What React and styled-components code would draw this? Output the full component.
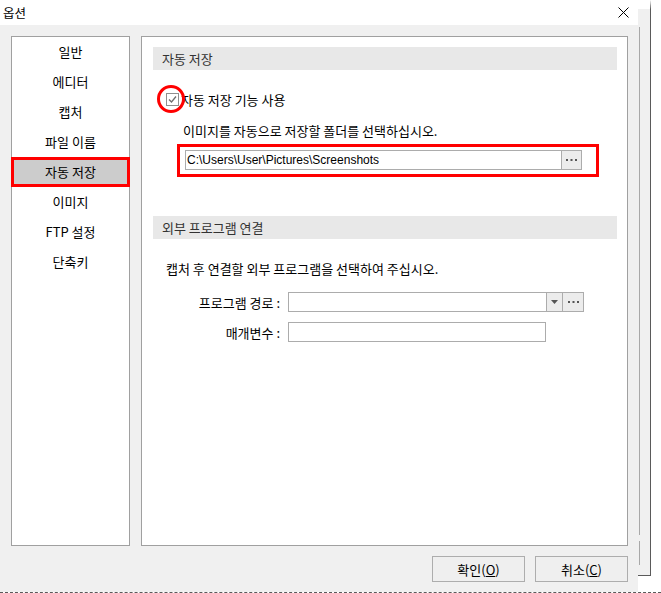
import styled, { createGlobalStyle } from 'styled-components';

const GlobalStyle = createGlobalStyle`
  html, body { margin: 0; padding: 0; background: #ffffff; }
  body {
    font-family: "Noto Sans CJK KR", "Noto Sans", "Liberation Sans", sans-serif;
    font-size: 13px;
    color: #000;
  }
`;

const menuItems = ['일반', '에디터', '캡처', '파일 이름', '자동 저장', '이미지', 'FTP 설정', '단축키'];

const App = () => {
  return (
    <>
      <GlobalStyle />
      <Screen>
        <TopRow>
          <Dialog>
            <TitleBar>
              <Title>옵션</Title>
              <CloseButton>
                <svg width="11" height="11" viewBox="0 0 11 11">
                  <path d="M0.5 0.5 L10.5 10.5 M10.5 0.5 L0.5 10.5" stroke="#000" strokeWidth="1" fill="none" />
                </svg>
              </CloseButton>
            </TitleBar>

            <Body>
              <MenuPanel>
                {menuItems.map((item) => (
                  <MenuItem key={item} selected={item === '자동 저장'}>{item}</MenuItem>
                ))}
              </MenuPanel>

              <ContentPanel>
                <SectionHeader>자동 저장</SectionHeader>
                <CheckRow>
                  <CheckBox>
                    <svg width="11" height="11" viewBox="0 0 11 11">
                      <path d="M2 5.5 L4.5 8 L9 2.5" stroke="#6e6e6e" strokeWidth="1.3" fill="none" />
                    </svg>
                  </CheckBox>
                  <RedCircle />
                  <CheckLabel>자동 저장 기능 사용</CheckLabel>
                </CheckRow>
                <Hint indent={41} top={13}>이미지를 자동으로 저장할 폴더를 선택하십시오.</Hint>
                <Highlight>
                  <Field width={397}>
                    <FieldText latin>C:\Users\User\Pictures\Screenshots</FieldText>
                    <FieldButton width={20}><Dots /></FieldButton>
                  </Field>
                </Highlight>

                <SectionHeader top={39}>외부 프로그램 연결</SectionHeader>
                <Hint indent={24} top={21}>캡처 후 연결할 외부 프로그램을 선택하여 주십시오.</Hint>
                <FormRow top={14}>
                  <FormLabel>프로그램 경로 :</FormLabel>
                  <Field width={296}>
                    <FieldText />
                    <FieldButton width={16}>
                      <svg width="7" height="4" viewBox="0 0 7 4">
                        <path d="M0 0 L7 0 L3.5 4 Z" fill="#555" />
                      </svg>
                    </FieldButton>
                    <FieldButton width={21}><Dots /></FieldButton>
                  </Field>
                </FormRow>
                <FormRow top={10}>
                  <FormLabel>매개변수 :</FormLabel>
                  <Field width={258} />
                </FormRow>
              </ContentPanel>
            </Body>

            <Footer>
              <DialogButton>확인(<u>O</u>)</DialogButton>
              <DialogButton>취소(<u>C</u>)</DialogButton>
            </Footer>
          </Dialog>

          <BehindWindow>
            <BehindInner>
              <BehindLine height={508} />
              <BehindLine height={24} />
            </BehindInner>
          </BehindWindow>
        </TopRow>
      </Screen>
    </>
  );
};

const Dots = () => (
  <svg width="11" height="3" viewBox="0 0 11 3">
    <rect x="0" y="0" width="2" height="2" fill="#555" />
    <rect x="4.5" y="0" width="2" height="2" fill="#555" />
    <rect x="9" y="0" width="2" height="2" fill="#555" />
  </svg>
);

export default App;

const Screen = styled.div`
  width: 661px;
  height: 593px;
  overflow: hidden;
  display: flex;
  flex-direction: column;
  border-bottom: 1px dashed #5a5a5a;
  box-sizing: border-box;
`;

const TopRow = styled.div`
  display: flex;
  height: 592px;
`;

const Dialog = styled.div`
  width: 638px;
  height: 592px;
  background: #f0f0f0;
  display: flex;
  flex-direction: column;
`;

const TitleBar = styled.div`
  height: 25px;
  background: #ffffff;
  display: flex;
  align-items: center;
  justify-content: space-between;
  padding: 0 9px 0 3px;
`;

const Title = styled.span`
  font-size: 12.5px;
  color: #000;
`;

const CloseButton = styled.span`
  display: flex;
  align-items: center;
  width: 11px;
  height: 11px;
`;

const Body = styled.div`
  display: flex;
  gap: 11px;
  padding: 11px 0 0 11px;
`;

const MenuPanel = styled.div`
  width: 119px;
  height: 510px;
  box-sizing: border-box;
  background: #ffffff;
  border: 1px solid #a0a0a0;
  display: flex;
  flex-direction: column;
`;

const MenuItem = styled.div`
  height: 30px;
  display: flex;
  align-items: center;
  justify-content: center;
  box-sizing: border-box;
  padding-bottom: 1px;
  font-size: 13px;
  color: #000;
  ${({ selected }) => selected && `
    background: #cccccc;
    border: 3px solid #ff0000;
    margin: 0 -1px;
  `}
`;

const ContentPanel = styled.div`
  width: 487px;
  height: 510px;
  box-sizing: border-box;
  background: #ffffff;
  border: 1px solid #a0a0a0;
  padding: 10px 10px 0 11px;
  display: flex;
  flex-direction: column;
`;

const SectionHeader = styled.div`
  height: 23px;
  margin-top: ${({ top }) => top || 0}px;
  background: #e8e8e8;
  display: flex;
  align-items: center;
  padding-left: 9px;
  color: #333;
  font-size: 13px;
`;

const CheckRow = styled.div`
  position: relative;
  height: 20px;
  margin-top: 19px;
  padding-left: 13px;
  display: flex;
  align-items: center;
  gap: 2px;
`;

const CheckBox = styled.span`
  width: 13px;
  height: 13px;
  box-sizing: border-box;
  border: 1px solid #8f8f8f;
  background: #fff;
  display: flex;
  align-items: center;
  justify-content: center;
`;

const RedCircle = styled.span`
  position: absolute;
  left: 4px;
  top: -4px;
  width: 28px;
  height: 28px;
  box-sizing: border-box;
  border: 3px solid #ff0000;
  border-radius: 50%;
`;

const CheckLabel = styled.span`
  font-size: 13px;
  color: #000;
`;

const Hint = styled.div`
  margin-top: ${({ top }) => top}px;
  padding-left: ${({ indent }) => indent - 11}px;
  height: 18px;
  line-height: 18px;
  font-size: 13px;
  color: #000;
`;

const Highlight = styled.div`
  margin: 4px 0 0 24px;
  width: 422px;
  box-sizing: border-box;
  border: 3px solid #ff0000;
  padding: 3px 0 4px 5px;
`;

const Field = styled.div`
  width: ${({ width }) => width}px;
  height: 20px;
  box-sizing: border-box;
  border: 1px solid #acacac;
  background: #fff;
  display: flex;
`;

const FieldText = styled.div`
  flex: 1;
  display: flex;
  align-items: center;
  padding-left: 1px;
  font-family: ${({ latin }) => (latin ? '"Liberation Sans", Arial, sans-serif' : 'inherit')};
  font-size: ${({ latin }) => (latin ? 12 : 13)}px;
  color: #000;
  white-space: nowrap;
  overflow: hidden;
`;

const FieldButton = styled.div`
  width: ${({ width }) => width}px;
  box-sizing: border-box;
  border-left: 1px solid #acacac;
  background: #ececec;
  display: flex;
  align-items: center;
  justify-content: center;
`;

const FormRow = styled.div`
  display: flex;
  align-items: center;
  gap: 8px;
  margin-top: ${({ top }) => top}px;
`;

const FormLabel = styled.div`
  width: 127px;
  text-align: right;
  font-size: 13px;
  color: #000;
`;

const Footer = styled.div`
  display: flex;
  justify-content: flex-end;
  gap: 10px;
  padding: 10px 10px 0 0;
`;

const DialogButton = styled.div`
  width: 93px;
  height: 26px;
  box-sizing: border-box;
  border: 1px solid #adadad;
  background: #efefef;
  display: flex;
  align-items: center;
  justify-content: center;
  font-size: 13px;
  color: #000;
`;

const BehindWindow = styled.div`
  width: 13px;
  height: 576px;
  box-sizing: border-box;
  background: #f0f0f0;
  border-right: 1px solid #5a5a5a;
  border-bottom: 1px solid #5a5a5a;
  border-top: 9px solid #ffffff;
`;

const BehindInner = styled.div`
  display: flex;
  flex-direction: column;
  gap: 6px;
  padding: 18px 0 0 1px;
`;

const BehindLine = styled.div`
  width: 0;
  height: ${({ height }) => height}px;
  border-left: 1px solid #a8a8a8;
`;
